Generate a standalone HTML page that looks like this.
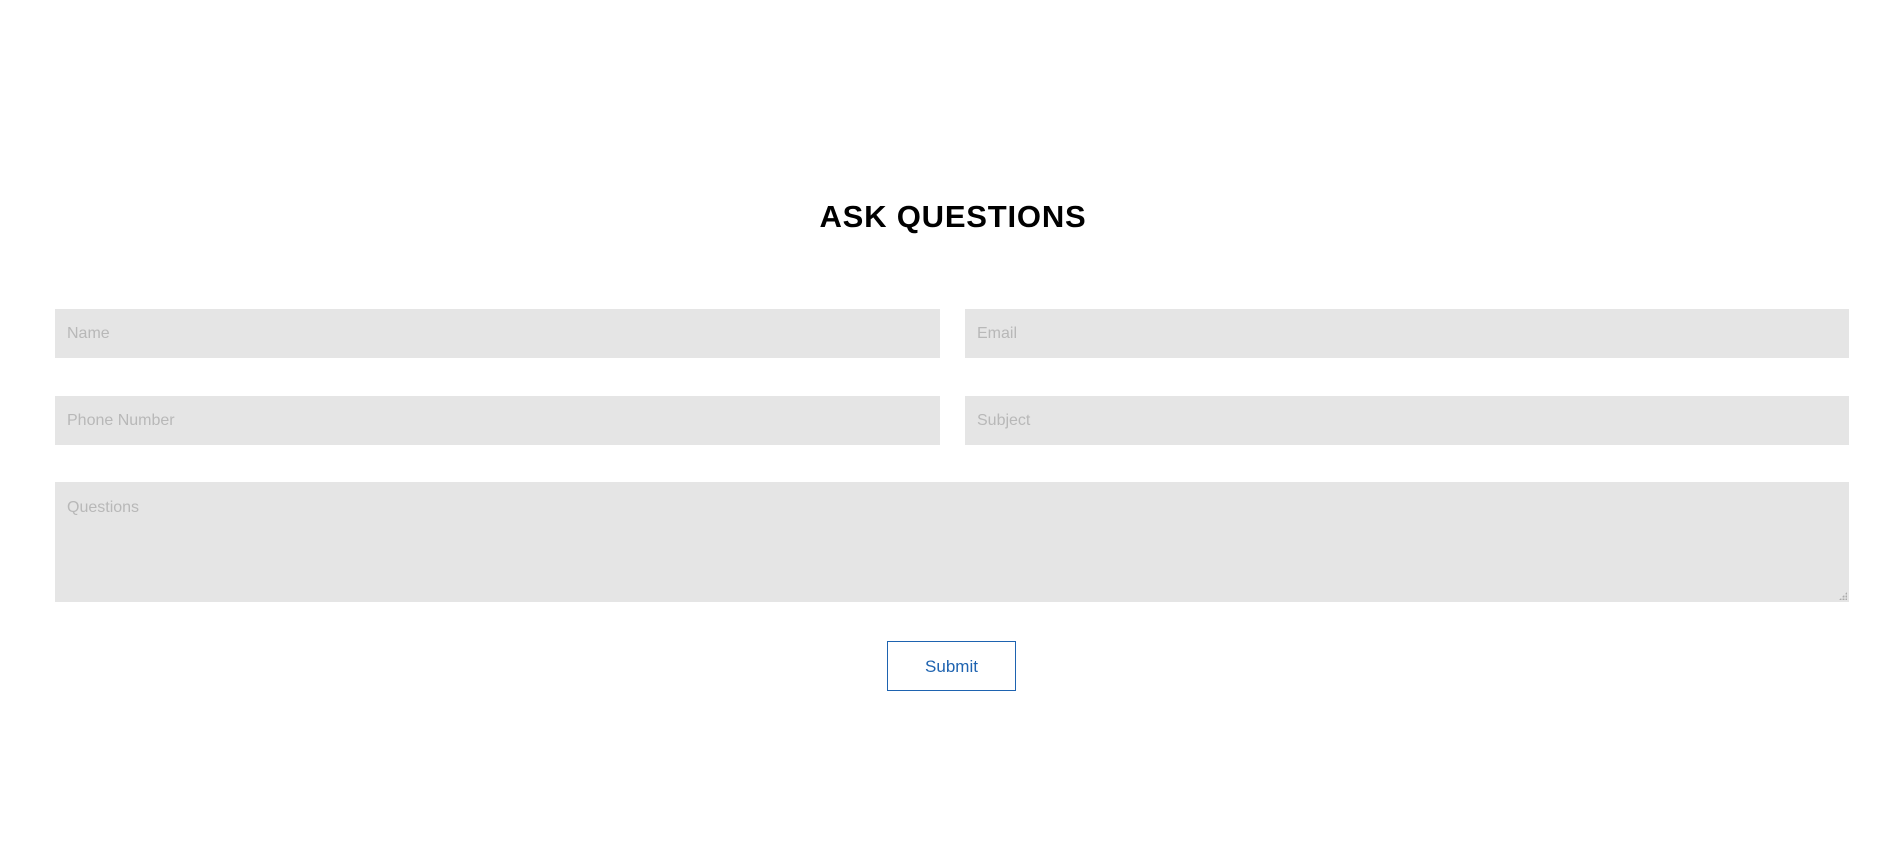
<!DOCTYPE html>
<html><head><meta charset="utf-8"><style>
html,body{margin:0;padding:0;background:#fff;width:1891px;height:847px;overflow:hidden;font-family:"Liberation Sans",sans-serif;}
h1{position:absolute;left:3px;width:1900px;top:199px;margin:0;text-align:center;font-size:31px;line-height:36px;font-weight:bold;color:#000;letter-spacing:0.8px;}
.f{position:absolute;background:#e5e5e5;color:#b8b8b8;font-size:16px;box-sizing:border-box;padding-left:12px;line-height:50px;}
.btn{position:absolute;left:887px;top:641px;width:129px;height:50px;box-sizing:border-box;border:1px solid #1e63b0;color:#1e63b0;font-size:17px;text-align:center;line-height:50px;}
.grip{position:absolute;right:2px;bottom:2px;width:8px;height:8px;background:
radial-gradient(circle,#aaa 1px,transparent 1.2px) 0 0/3px 3px;clip-path:polygon(100% 0,100% 100%,0 100%);}
</style></head><body>
<h1>ASK QUESTIONS</h1>
<div class="f" style="left:55px;top:309px;width:885px;height:49px;">Name</div>
<div class="f" style="left:965px;top:309px;width:884px;height:49px;">Email</div>
<div class="f" style="left:55px;top:396px;width:885px;height:49px;">Phone Number</div>
<div class="f" style="left:965px;top:396px;width:884px;height:49px;">Subject</div>
<div class="f" style="left:55px;top:482px;width:1794px;height:120px;line-height:20px;padding-top:16px;">Questions<div class="grip"></div></div>
<div class="btn">Submit</div>
</body></html>
